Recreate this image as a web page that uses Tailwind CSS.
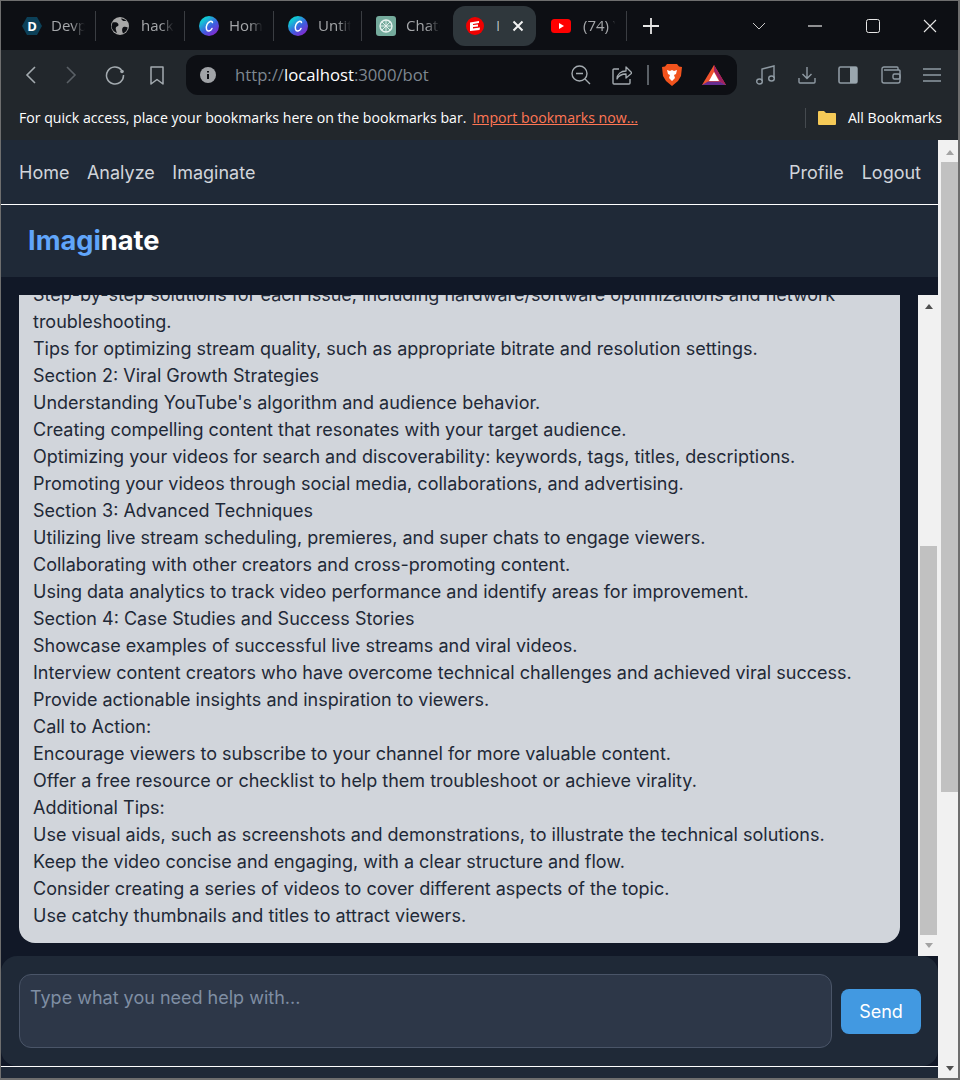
<!DOCTYPE html>
<html>
	<head>
		<meta charset="UTF-8" />
		<title>Imaginate</title>
		<script src="https://cdn.jsdelivr.net/npm/@tailwindcss/browser@4"></script>
	</head>
	<body class="w-[960px] h-[1080px] overflow-hidden bg-[#6e6e6e] font-['Inter',sans-serif]">
		<div class="flex flex-col h-[1077px] ml-px mr-[2px] mt-px overflow-hidden">
			<!-- tab strip -->
			<div class="flex items-center h-[49px] bg-[#0d0f14] text-[#a5a7aa] text-[15px] font-['Open_Sans',sans-serif] shrink-0">
				<div class="w-[6px]"></div>
				<div class="flex items-center w-[89px] h-[30px] pl-[15px] border-r border-[#3a3d42]">
					<svg width="20" height="18" viewBox="0 0 20 18"><path d="M5 0h10l5 9-5 9H5L0 9z" fill="#0c4058"/><text x="10" y="14" text-anchor="middle" font-size="13" font-weight="700" fill="#fff" font-family="Open Sans">D</text></svg>
					<span class="ml-[9px] w-[34px] overflow-hidden whitespace-nowrap [mask-image:linear-gradient(to_right,black_60%,transparent)]">Devpost</span>
				</div>
				<div class="flex items-center w-[89px] h-[30px] pl-[15px] border-r border-[#3a3d42]">
					<svg width="18" height="18" viewBox="0 0 18 18"><circle cx="9" cy="9" r="9" fill="#a8a8a8"/><path d="M1.500 5.500c2.500-.5 4.500-.5 5.500 1s.5 2.500-1 3-1.500 2-1 3.500c.3 1 .5 2 1 3-3-1-5-3.500-5.500-6.500zM10 1.500c1 2 2 2.500 3.500 2.500s2 0 2.500.5c-1-1.500-3.500-3-6-3zM16.700 10.500c-2-1-4.500-1-5.200.5s-.5 3 .5 5.500c2.500-1 4.300-3.300 4.700-6z" fill="#0d0f14"/></svg>
					<span class="ml-[12px] w-[33px] overflow-hidden whitespace-nowrap [mask-image:linear-gradient(to_right,black_60%,transparent)]">hackathon</span>
				</div>
				<div class="flex items-center w-[89px] h-[30px] pl-[14px] border-r border-[#3a3d42]">
					<svg width="20" height="20" viewBox="0 0 20 20"><defs><linearGradient id="canvaA" x1="0.100" y1="0.100" x2="0.800" y2="1"><stop offset="0.150" stop-color="#12c6d4"/><stop offset="0.550" stop-color="#3d5fe0"/><stop offset="0.900" stop-color="#7a2fd0"/></linearGradient></defs><circle cx="10" cy="10" r="10" fill="url(#canvaA)"/><path d="M13.500 6.500C13 4.500 9.500 5 8 8.500s-.5 7 2 6.500c1.500-.3 2.500-1.500 3-2.500" fill="none" stroke="#fff" stroke-width="1.500" stroke-linecap="round"/></svg>
					<span class="ml-[10px] w-[34px] overflow-hidden whitespace-nowrap [mask-image:linear-gradient(to_right,black_60%,transparent)]">Home</span>
				</div>
				<div class="flex items-center w-[88px] h-[30px] pl-[14px] border-r border-[#3a3d42]">
					<svg width="20" height="20" viewBox="0 0 20 20"><circle cx="10" cy="10" r="10" fill="url(#canvaA)"/><path d="M13.500 6.500C13 4.500 9.500 5 8 8.500s-.5 7 2 6.500c1.500-.3 2.500-1.500 3-2.500" fill="none" stroke="#fff" stroke-width="1.500" stroke-linecap="round"/></svg>
					<span class="ml-[10px] w-[33px] overflow-hidden whitespace-nowrap [mask-image:linear-gradient(to_right,black_60%,transparent)]">Untitled</span>
				</div>
				<div class="flex items-center w-[91px] h-[30px] pl-[14px]">
					<svg width="20" height="20" viewBox="0 0 20 20"><rect width="20" height="20" rx="3" fill="#74aa9c"/><circle cx="10" cy="10" r="6" fill="none" stroke="#e8f3f0" stroke-width="1.400"/><path d="M6 6l8 8M14 6l-8 8M10 4v12M4 10h12" stroke="#e8f3f0" stroke-width="0.900"/></svg>
					<span class="ml-[10px] w-[34px] overflow-hidden whitespace-nowrap [mask-image:linear-gradient(to_right,black_60%,transparent)]">ChatGPT</span>
				</div>
				<div class="flex items-center w-[83px] h-[40px] pl-[13px] rounded-xl bg-[#2f373c]">
					<svg width="18" height="18" viewBox="0 0 18 18"><circle cx="9" cy="9" r="9" fill="#f00000"/><path d="M4 5.500l9-1.500v2l-6 1v1l5-.5v2l-5 .5v1.500l7-1-.5 2.500-9.500 1z" fill="#fff"/></svg>
					<span class="ml-[12px] text-[#b5b8ba] overflow-hidden w-[3px]">I</span>
					<svg class="ml-[13px]" width="12" height="12" viewBox="0 0 12 12"><path d="M1.500 1.500l9 9M10.500 1.500l-9 9" stroke="#f2f2f2" stroke-width="2"/></svg>
				</div>
				<div class="flex items-center w-[89px] h-[30px] pl-[13px] ml-[2px] border-r border-[#3a3d42]">
					<svg width="20" height="14" viewBox="0 0 20 14"><rect width="20" height="14" rx="3.500" fill="#f00"/><path d="M8 4l5 3-5 3z" fill="#fff"/></svg>
					<span class="ml-[12px] w-[32px] overflow-hidden whitespace-nowrap [mask-image:linear-gradient(to_right,black_85%,transparent)]">(74) YouTube</span>
				</div>
				<svg class="ml-[16px]" width="16" height="16" viewBox="0 0 16 16"><path d="M8 0v16M0 8h16" stroke="#e6e6e6" stroke-width="1.800"/></svg>
				<svg class="ml-[93px]" width="14" height="8" viewBox="0 0 14 8"><path d="M1 1l6 6 6-6" fill="none" stroke="#c9c9c9" stroke-width="1"/></svg>
				<svg class="ml-[42px]" width="14" height="2" viewBox="0 0 14 2"><path d="M0 1h14" stroke="#e6e6e6" stroke-width="1.200"/></svg>
				<svg class="ml-[44px]" width="14" height="14" viewBox="0 0 14 14"><rect x="0.500" y="0.500" width="13" height="13" rx="2" fill="none" stroke="#e6e6e6" stroke-width="1"/></svg>
				<svg class="ml-[43px]" width="14" height="14" viewBox="0 0 14 14"><path d="M1 1l12 12M13 1L1 13" stroke="#e6e6e6" stroke-width="1.100"/></svg>
			</div>

			<!-- toolbar -->
			<div class="flex items-center h-[50px] bg-[#22272c] shrink-0">
				<svg class="ml-[24px]" width="11" height="18" viewBox="0 0 11 18"><path d="M10 1L2 9l8 8" fill="none" stroke="#a4abb0" stroke-width="1.600"/></svg>
				<svg class="ml-[30px]" width="11" height="18" viewBox="0 0 11 18"><path d="M1 1l8 8-8 8" fill="none" stroke="#5a6066" stroke-width="1.600"/></svg>
				<svg class="ml-[28px]" width="20" height="20" viewBox="0 0 20 20"><path d="M16.500 5A8.500 8.500 0 1 0 18.500 10" fill="none" stroke="#a4abb0" stroke-width="1.500"/><circle cx="17" cy="6.500" r="1.800" fill="#a4abb0"/></svg>
				<svg class="ml-[25px]" width="14" height="19" viewBox="0 0 14 19"><path d="M1 1h12v17l-6-4.500L1 18z" fill="none" stroke="#a4abb0" stroke-width="1.500" stroke-linejoin="round"/></svg>
				<div class="flex items-center w-[551px] h-[40px] ml-[22px] rounded-xl bg-[#0d0f14]">
					<svg class="ml-[14px]" width="16" height="16" viewBox="0 0 16 16"><circle cx="8" cy="8" r="8" fill="#a0a3a7"/><path d="M8 7v5M8 4v1.500" stroke="#0d0f14" stroke-width="2"/></svg>
					<span class="ml-[19px] text-[16.700px] font-['Open_Sans',sans-serif] text-[#7e8790] w-[300px] whitespace-nowrap">http://<span class="text-white">localhost</span>:3000/bot</span>
					<svg class="ml-[36px]" width="20" height="20" viewBox="0 0 20 20"><circle cx="8.500" cy="8.500" r="7.500" fill="none" stroke="#a4abb0" stroke-width="1.400"/><path d="M5 8.500h7M14 14l5 5" stroke="#a4abb0" stroke-width="1.400"/></svg>
					<svg class="ml-[21px]" width="20" height="20" viewBox="0 0 20 20"><path d="M7 4H2a1 1 0 0 0-1 1v13a1 1 0 0 0 1 1h15a1 1 0 0 0 1-1v-4" fill="none" stroke="#a4abb0" stroke-width="1.400"/><path d="M5 14c0-5 4-8 9-8V2l6 6-6 5V9c-4 0-7 1-9 5z" fill="none" stroke="#a4abb0" stroke-width="1.300" stroke-linejoin="round"/></svg>
					<div class="ml-[15px] w-[2px] h-[20px] bg-[#5a6066]"></div>
					<svg class="ml-[13px]" width="20" height="22" viewBox="0 0 20 22"><path d="M5 0h10l2 2.500 3 .5-1 9-3 5-6 5-6-5-3-5-1-9 3-.5z" fill="#f1531d"/><path d="M5 6l3 1 2-1 2 1 3-1-1 4-2 1 1 3-3 3-3-3 1-3-2-1z" fill="#fff"/></svg>
					<svg class="ml-[20px]" width="24" height="21" viewBox="0 0 24 21"><path d="M12 0L0 20h24z" fill="#f0532d"/><path d="M0 20l6-3.500h12L24 20z" fill="#662d91"/><path d="M12 0l12 20-6-3.500L12 6z" fill="#9e1f63"/><path d="M12 7l-5 9h10z" fill="#fff"/></svg>
				</div>
				<svg class="ml-[19px]" width="20" height="20" viewBox="0 0 20 20"><path d="M6 16V4l12-3v12" fill="none" stroke="#8f9aa3" stroke-width="1.400"/><ellipse cx="3.500" cy="16.500" rx="2.800" ry="2.500" fill="none" stroke="#8f9aa3" stroke-width="1.400"/><ellipse cx="15.500" cy="13.500" rx="2.800" ry="2.500" fill="none" stroke="#8f9aa3" stroke-width="1.400"/></svg>
				<svg class="ml-[22px]" width="18" height="18" viewBox="0 0 18 18"><path d="M9 1v11M4.500 8L9 12.500 13.500 8M1 12v4a1 1 0 0 0 1 1h14a1 1 0 0 0 1-1v-4" fill="none" stroke="#8f9aa3" stroke-width="1.400"/></svg>
				<svg class="ml-[22px]" width="20" height="18" viewBox="0 0 20 18"><rect x="1" y="1" width="18" height="16" rx="1.500" fill="none" stroke="#8f9aa3" stroke-width="1.600"/><rect x="12" y="1" width="7" height="16" fill="#9aa6ae"/></svg>
				<svg class="ml-[23px]" width="20" height="18" viewBox="0 0 20 18"><path d="M17 4V2a1 1 0 0 0-1-1H3a2 2 0 0 0-2 2v12a2 2 0 0 0 2 2h14a2 2 0 0 0 2-2V5a1 1 0 0 0-1-1H3" fill="none" stroke="#8f9aa3" stroke-width="1.400"/><rect x="12" y="8" width="7" height="5" rx="1.500" fill="none" stroke="#8f9aa3" stroke-width="1.400"/></svg>
				<svg class="ml-[22px]" width="18" height="14" viewBox="0 0 18 14"><path d="M0 1h18M0 7h18M0 13h18" stroke="#8f9aa3" stroke-width="1.400"/></svg>
			</div>

			<!-- bookmarks bar -->
			<div class="flex items-center h-[40px] pb-[5px] pl-[18px] pr-[16px] bg-[#22272c] text-[14.130px] font-['Open_Sans',sans-serif] text-white shrink-0 whitespace-nowrap">
				<span>For quick access, place your bookmarks here on the bookmarks bar.</span>
				<span class="ml-[6px] text-[#ff7654] underline">Import bookmarks now...</span>
				<div class="ml-auto w-px h-[20px] bg-[#454a4f]"></div>
				<svg class="ml-[11px]" width="20" height="16" viewBox="0 0 20 16"><path d="M1 2a1 1 0 0 1 1-1h5l2 2h9a1 1 0 0 1 1 1v10a1 1 0 0 1-1 1H2a1 1 0 0 1-1-1z" fill="#f6ca57"/></svg>
				<span class="ml-[11px]">All Bookmarks</span>
			</div>

			<!-- page -->
			<div class="flex flex-1 min-h-0 text-[18px]">
				<div class="flex flex-col w-[937px] bg-[#1f2937]">
					<nav class="flex items-center justify-between h-[65px] pl-[18px] pr-[17px] border-b border-white text-[#d1d5db]">
						<div class="flex gap-[17.500px]">
							<a>Home</a>
							<a>Analyze</a>
							<a>Imaginate</a>
						</div>
						<div class="flex gap-[18px]">
							<a>Profile</a>
							<a>Logout</a>
						</div>
					</nav>
					<div class="flex items-center h-[72px] px-[27px] text-[27.200px] font-bold text-white">
						<h1><span class="text-[#60a5fa]">Imagi</span>nate</h1>
					</div>

					<main class="flex flex-1 min-h-0 bg-[#111827]">
						<div class="flex-1 min-w-0 pt-[18px] pl-[18px] pr-[18px] pb-[12px]">
							<div class="h-[648px] overflow-hidden rounded-b-2xl bg-[#d1d5db] text-[#1f2937] leading-[27px] px-[14px]">
								<div class="-mt-[14px]">
									<p>Step-by-step solutions for each issue, including hardware/software optimizations and network troubleshooting.</p>
									<p>Tips for optimizing stream quality, such as appropriate bitrate and resolution settings.</p>
									<p>Section 2: Viral Growth Strategies</p>
									<p>Understanding YouTube's algorithm and audience behavior.</p>
									<p>Creating compelling content that resonates with your target audience.</p>
									<p>Optimizing your videos for search and discoverability: keywords, tags, titles, descriptions.</p>
									<p>Promoting your videos through social media, collaborations, and advertising.</p>
									<p>Section 3: Advanced Techniques</p>
									<p>Utilizing live stream scheduling, premieres, and super chats to engage viewers.</p>
									<p>Collaborating with other creators and cross-promoting content.</p>
									<p>Using data analytics to track video performance and identify areas for improvement.</p>
									<p>Section 4: Case Studies and Success Stories</p>
									<p>Showcase examples of successful live streams and viral videos.</p>
									<p>Interview content creators who have overcome technical challenges and achieved viral success.</p>
									<p>Provide actionable insights and inspiration to viewers.</p>
									<p>Call to Action:</p>
									<p>Encourage viewers to subscribe to your channel for more valuable content.</p>
									<p>Offer a free resource or checklist to help them troubleshoot or achieve virality.</p>
									<p>Additional Tips:</p>
									<p>Use visual aids, such as screenshots and demonstrations, to illustrate the technical solutions.</p>
									<p>Keep the video concise and engaging, with a clear structure and flow.</p>
									<p>Consider creating a series of videos to cover different aspects of the topic.</p>
									<p>Use catchy thumbnails and titles to attract viewers.</p>
								</div>
							</div>
						</div>
						<!-- chat scrollbar -->
						<div class="flex flex-col w-[20px] mt-[18px] bg-[#f1f1f1] pl-[2px] pr-px">
							<div class="flex justify-center h-[22px] items-center"><div class="w-0 h-0 border-x-[4.500px] border-x-transparent border-b-[5px] border-b-[#505050]"></div></div>
							<div class="h-[229px]"></div>
							<div class="flex-1 bg-[#c1c1c1]"></div>
							<div class="flex justify-center h-[21px] items-center"><div class="w-0 h-0 border-x-[4.500px] border-x-transparent border-t-[5px] border-t-[#a3a3a3]"></div></div>
						</div>
					</main>

					<div class="bg-[#111827] border-b border-white shrink-0">
						<div class="flex items-center h-[110px] pl-[18px] pr-[17px] gap-[9px] rounded-2xl bg-[#1f2937]">
							<textarea class="w-[813px] h-[74px] px-[10px] pt-[9px] rounded-xl border border-[#4a5568] bg-[#2d3748] text-[#e2e8f0] placeholder-[#7f8ea3] resize-none outline-none" placeholder="Type what you need help with..."></textarea>
							<button class="w-[80px] h-[45px] rounded-lg bg-[#4299e1] text-white">Send</button>
						</div>
					</div>
					<div class="h-[11px] bg-[#1f2937] shrink-0"></div>
				</div>
				<!-- page scrollbar -->
				<div class="flex flex-col w-[20px] bg-[#f1f1f1] pl-[3px]">
					<div class="flex justify-center h-[22px] pt-[2px] items-center"><div class="w-0 h-0 border-x-[4.500px] border-x-transparent border-b-[5px] border-b-[#a3a3a3]"></div></div>
					<div class="h-[630px] bg-[#c1c1c1]"></div>
					<div class="flex-1"></div>
					<div class="flex justify-center h-[20px] items-center"><div class="w-0 h-0 border-x-[4.500px] border-x-transparent border-t-[5px] border-t-[#505050]"></div></div>
				</div>
			</div>
		</div>
	</body>
</html>
